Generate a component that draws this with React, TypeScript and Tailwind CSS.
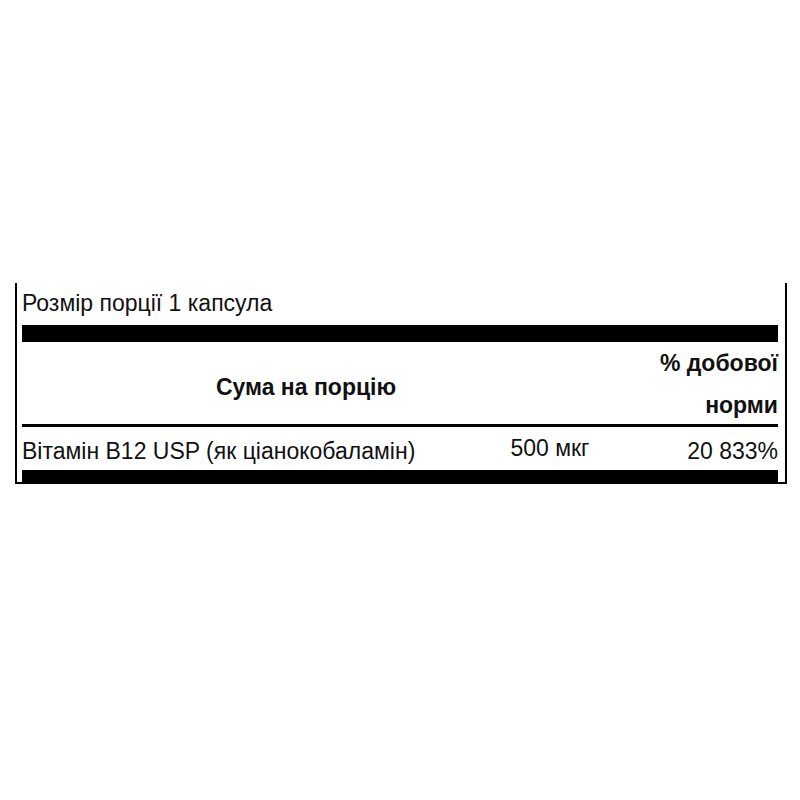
export default function App() {
  return (
    <div className="min-h-[800px] w-[800px] bg-white pl-[15px] pt-[283px] font-['Liberation_Sans',Arial,sans-serif] text-[#111]">
      <div className="w-[772px] border-x-2 border-b-2 border-black pl-[5px] pr-[7px]">
        <div className="flex h-[42px] items-center pb-[2px] text-[23px]">
          Розмір порції 1 капсула
        </div>
        <div className="h-[17px] bg-black" />

        <div className="grid h-[82px] grid-cols-[568px_188px]">
          <div className="flex items-center justify-center pt-[6px] text-[23px] font-bold">
            Сума на порцію
          </div>
          <div className="flex flex-col items-end text-[23px] font-bold leading-[42px]">
            <span>% добової</span>
            <span>норми</span>
          </div>
        </div>
        <div className="h-[3px] bg-black" />

        <div className="grid h-[43px] grid-cols-[488px_80px_188px] items-center text-[23px]">
          <div className="pt-[6px]">Вітамін B12 USP (як ціанокобаламін)</div>
          <div className="whitespace-nowrap text-center">500 мкг</div>
          <div className="pt-[6px] text-right">20 833%</div>
        </div>
        <div className="h-[12px] bg-black" />
      </div>
    </div>
  );
}
